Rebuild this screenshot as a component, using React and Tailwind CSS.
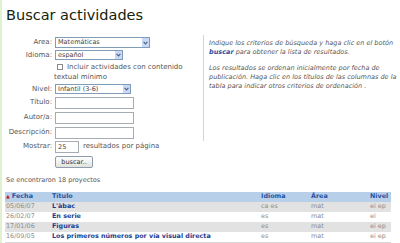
import React from "react";

const Select = ({ w, h, value }) => (
  <div className={`flex items-center border border-[#7f9db9] bg-white ${w} ${h}`}>
    <span className="flex-1 pl-[2px] text-[6.5px] leading-none text-[#444] whitespace-nowrap">{value}</span>
    <span className="w-[8px] h-full border-l border-white bg-[#c9d8f5] flex items-center justify-center">
      <svg width="5" height="4" viewBox="0 0 5 4"><path d="M0.6 0.8 L2.5 2.9 L4.4 0.8" stroke="#4d6185" strokeWidth="1.1" fill="none" /></svg>
    </span>
  </div>
);

const Input = ({ w, value }) => (
  <div className={`h-[12px] border border-[#a5acb2] bg-white text-[6.5px] leading-[10px] pl-[2px] text-[#444] ${w}`}>{value}</div>
);

const Label = ({ children }) => (
  <div className="w-[51px] shrink-0 text-right pr-[1px] text-[7px] leading-none text-[#555] whitespace-nowrap">{children}</div>
);

const rows = [
  { f: "05/06/07", t: "L'àbac", i: "ca es", a: "mat", n: "ei ep", bg: "bg-[#e2e2e2]" },
  { f: "26/02/07", t: "En serie", i: "es", a: "mat", n: "ei", bg: "bg-white" },
  { f: "17/01/06", t: "Figuras", i: "es", a: "mat", n: "ei ep", bg: "bg-[#e2e2e2]" },
  { f: "16/09/05", t: "Los primeros números por vía visual directa", i: "es", a: "mat", n: "ei ep", bg: "bg-white" },
];

export default function App() {
  return (
    <div className="w-[400px] h-[243px] overflow-hidden bg-white border-l-2 border-[#e2f0d2] font-['DejaVu_Sans',sans-serif]">
      <h1 className="pl-[4px] pt-[7px] text-[14.5px] leading-[17px] text-[#16230c] font-normal whitespace-nowrap">Buscar actividades</h1>
      <div className="flex mt-[12px]">
        <div className="w-[199px] shrink-0 flex flex-col">
          <div className="flex items-center gap-[2px] h-[13px]">
            <Label>Area:</Label>
            <Select w="w-[95px]" h="h-[11px]" value="Matemáticas" />
          </div>
          <div className="flex items-center gap-[2px] h-[12px]">
            <Label>Idioma:</Label>
            <Select w="w-[68px]" h="h-[10px]" value="español" />
          </div>
          <div className="pl-[52px] h-[22px] pt-[1px] text-[7px] leading-[10px] text-[#555]">
            <div className="flex items-center whitespace-nowrap">
              <span className="inline-block w-[6px] h-[6px] border border-[#8a8a8a] ml-[3px] mr-[4px] bg-white"></span>
              Incluir actividades con contenido
            </div>
            <div className="whitespace-nowrap">textual mínimo</div>
          </div>
          <div className="flex items-center gap-[2px] h-[12px]">
            <Label>Nivel:</Label>
            <Select w="w-[76px]" h="h-[10px]" value="Infantil (3-6)" />
          </div>
          <div className="flex items-center gap-[2px] h-[15px]">
            <Label>Título:</Label>
            <Input w="w-[79px]" />
          </div>
          <div className="flex items-center gap-[2px] h-[15px]">
            <Label>Autor/a:</Label>
            <Input w="w-[79px]" />
          </div>
          <div className="flex items-center gap-[2px] h-[15px]">
            <Label>Descripción:</Label>
            <Input w="w-[79px]" />
          </div>
          <div className="flex items-center gap-[2px] h-[13px]">
            <Label>Mostrar:</Label>
            <Input w="w-[24px]" value="25" />
            <span className="text-[7px] leading-none text-[#555] ml-[2px] whitespace-nowrap">resultados por página</span>
          </div>
          <div className="pl-[53px] mt-[3px]">
            <div className="w-[38px] h-[12px] border border-[#8d9ab0] rounded-[2px] bg-gradient-to-b from-[#ffffff] to-[#e2e2dc] text-[6.5px] leading-[10px] text-[#333] text-center">buscar..</div>
          </div>
        </div>
        <div className="mt-[-1px] ml-[2px] h-[106px] border-l border-[#d4d4d4] pl-[5px] text-[6.5px] leading-[9px] italic text-[#555] whitespace-nowrap">
          <p className="pt-[4px]">Indique los criterios de búsqueda y haga clic en el botón<br /><b className="text-[#2a4f9e] font-bold">buscar</b> para obtener la lista de resultados.</p>
          <p className="mt-[7px]">Los resultados se ordenan inicialmente por fecha de<br />publicación. Haga clic en los títulos de las columnas de la<br />tabla para indicar otros criterios de ordenación .</p>
        </div>
      </div>
      <div className="pl-[4px] mt-[7px] text-[6.5px] text-[#555] leading-[10px] whitespace-nowrap">Se encontraron 18 proyectos</div>
      <div className="ml-[3px] w-[386px] mt-[7px] text-[6.4px] whitespace-nowrap">
        <div className="flex h-[10px] items-center bg-[#b8cfe9] text-[#2653a3] font-bold">
          <div className="w-[47px] pl-[1px] flex items-center"><span className="text-[#c41a1a] text-[5px] mr-[2px]">▲</span>Fecha</div>
          <div className="w-[209px]">Título</div>
          <div className="w-[50px]">Idioma</div>
          <div className="w-[59px]">Área</div>
          <div className="flex-1">Nivel</div>
        </div>
        {rows.map((r) => (
          <div key={r.f} className={`flex h-[10px] items-center ${r.bg}`}>
            <div className="w-[47px] pl-[1px] text-[#8c8c8c]">{r.f}</div>
            <div className="w-[209px] text-[#1f3d8c] font-bold">{r.t}</div>
            <div className="w-[50px] text-[#8c8c8c]">{r.i}</div>
            <div className="w-[59px] text-[#8c8c8c]">{r.a}</div>
            <div className="flex-1 text-[#8c8c8c]">{r.n}</div>
          </div>
        ))}
        <div className="h-[1px] bg-[#d8d8d8]"></div>
      </div>
    </div>
  );
}
